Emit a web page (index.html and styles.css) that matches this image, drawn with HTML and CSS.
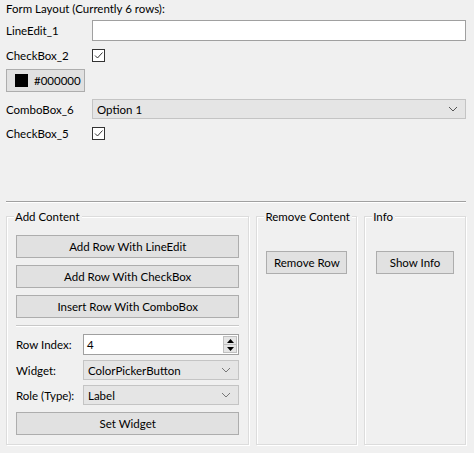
FILE: index.html
```html
<!DOCTYPE html>
<html>
<head>
<meta charset="utf-8">
<link rel="stylesheet" href="styles.css">
</head>
<body>
<div class="window">
  <div class="title">Form Layout (Currently 6 rows):</div>
  <div class="form">
    <div class="lbl">LineEdit_1</div>
    <div class="lineedit"></div>
    <div class="lbl">CheckBox_2</div>
    <div class="cell"><span class="check"><svg viewBox="0 0 13 13" width="13" height="13"><path d="M3 6.5 L5.5 9 L10.5 3.5" fill="none" stroke="#333" stroke-width="1"/></svg></span></div>
    <div class="span2"><button class="colorbtn"><span class="swatch"></span>#000000</button></div>
    <div class="lbl">ComboBox_6</div>
    <div class="combo big"><span>Option 1</span><svg class="chev" viewBox="0 0 10 6" width="10" height="6"><path d="M1 1 L5 5 L9 1" fill="none" stroke="#555" stroke-width="1"/></svg></div>
    <div class="lbl">CheckBox_5</div>
    <div class="cell"><span class="check"><svg viewBox="0 0 13 13" width="13" height="13"><path d="M3 6.5 L5.5 9 L10.5 3.5" fill="none" stroke="#333" stroke-width="1"/></svg></span></div>
  </div>
  <div class="sep"></div>
  <div class="groups">
    <div class="group add">
      <div class="gtitle">Add Content</div>
      <button class="btn">Add Row With LineEdit</button>
      <button class="btn">Add Row With CheckBox</button>
      <button class="btn">Insert Row With ComboBox</button>
      <div class="sep small"></div>
      <div class="subform">
        <div class="lbl">Row Index:</div>
        <div class="spin"><span class="val">4</span><span class="arrows"><span class="up"><svg viewBox="0 0 7 4" width="7" height="4"><path d="M0 4 L3.5 0 L7 4Z" fill="#000"/></svg></span><span class="down"><svg viewBox="0 0 7 4" width="7" height="4"><path d="M0 0 L3.5 4 L7 0Z" fill="#000"/></svg></span></span></div>
        <div class="lbl">Widget:</div>
        <div class="combo"><span>ColorPickerButton</span><svg class="chev" viewBox="0 0 10 6" width="10" height="6"><path d="M1 1 L5 5 L9 1" fill="none" stroke="#777" stroke-width="1"/></svg></div>
        <div class="lbl">Role (Type):</div>
        <div class="combo"><span>Label</span><svg class="chev" viewBox="0 0 10 6" width="10" height="6"><path d="M1 1 L5 5 L9 1" fill="none" stroke="#777" stroke-width="1"/></svg></div>
      </div>
      <button class="btn setw">Set Widget</button>
    </div>
    <div class="group remove">
      <div class="gtitle">Remove Content</div>
      <button class="btn">Remove Row</button>
    </div>
    <div class="group info">
      <div class="gtitle">Info</div>
      <button class="btn">Show Info</button>
    </div>
  </div>
</div>
</body>
</html>
```

FILE: styles.css
```css
html, body {
  margin: 0;
  padding: 0;
  background: #f0f0f0;
}
body {
  width: 474px;
  height: 453px;
  overflow: hidden;
  font-family: Lato, "Liberation Sans", sans-serif;
  font-size: 11.5px;
  color: #000;
}
.window {
  padding: 1px 8px 0 6px;
}
.title {
  height: 15px;
  line-height: 15px;
}
.form {
  margin-top: 4px;
  display: grid;
  grid-template-columns: 86px 1fr;
  grid-template-rows: 21px 14px 23px 20px 14px;
  row-gap: 7px;
}
.lbl {
  display: flex;
  align-items: center;
  white-space: nowrap;
}
.cell {
  display: flex;
  align-items: center;
}
.lineedit {
  background: #fff;
  border: 1px solid #a0a0a0;
  box-sizing: border-box;
  height: 21px;
}
.check {
  display: block;
  width: 13px;
  height: 13px;
  box-sizing: border-box;
  border: 1px solid #333;
  background: #fff;
  position: relative;
}
.check svg {
  position: absolute;
  left: -1px;
  top: -1px;
}
.span2 {
  grid-column: 1 / 3;
}
button {
  font: inherit;
  color: #000;
  margin: 0;
}
.colorbtn {
  height: 23px;
  width: 79px;
  box-sizing: border-box;
  background: #e1e1e1;
  border: 1px solid #adadad;
  display: flex;
  align-items: center;
  padding: 0 0 0 8px;
  gap: 6px;
}
.swatch {
  display: block;
  width: 13px;
  height: 13px;
  background: #000;
}
.combo {
  height: 20px;
  box-sizing: border-box;
  background: #e5e5e5;
  border: 1px solid #c4c4c4;
  display: flex;
  align-items: center;
  justify-content: space-between;
  padding: 0 7px 0 4px;
}
.chev {
  display: block;
}
.sep {
  margin-top: 61px;
  height: 1px;
  background: #a0a0a0;
  border-bottom: 1px solid #fff;
}
.groups {
  margin-top: 13px;
  display: flex;
  gap: 7px;
}
.group {
  position: relative;
  box-sizing: border-box;
  height: 229px;
  border: 1px solid #dcdcdc;
  box-shadow: inset 1px 1px 0 #fff, 1px 1px 0 #fff;
  display: flex;
  flex-direction: column;
}
.gtitle {
  position: absolute;
  top: -8px;
  left: 7px;
  padding: 0 2px 0 1px;
  background: #f0f0f0;
  line-height: 15px;
}
.add {
  width: 244px;
  padding: 18px 9px 0 9px;
}
.remove {
  width: 101px;
  padding: 34px 9px 0 9px;
}
.info {
  width: 102px;
  padding: 34px 11px 0 11px;
}
.btn {
  height: 23px;
  box-sizing: border-box;
  background: #e1e1e1;
  border: 1px solid #adadad;
  padding: 0;
  text-align: center;
  flex: none;
}
.add .btn {
  margin-bottom: 7px;
}
.sep.small {
  margin-top: 0;
  background: #c8c8c8;
  border-bottom: 1px solid #fff;
}
.subform {
  margin-top: 7px;
  display: grid;
  grid-template-columns: 67px 1fr;
  grid-template-rows: 21px 20px 20px;
  row-gap: 5px;
}
.spin {
  background: #fff;
  border: 1px solid #a0a0a0;
  box-sizing: border-box;
  display: flex;
  align-items: stretch;
  justify-content: space-between;
  padding-left: 3px;
}
.spin .val {
  display: flex;
  align-items: center;
}
.arrows {
  display: flex;
  flex-direction: column;
  width: 14px;
  padding: 1px;
}
.arrows span {
  flex: 1;
  display: flex;
  align-items: center;
  justify-content: center;
  background: #e5e5e5;
  border: 1px solid #c0c0c0;
}
.arrows .up {
  border-bottom: none;
}
.add .btn.setw {
  margin-top: 7px;
}
```
